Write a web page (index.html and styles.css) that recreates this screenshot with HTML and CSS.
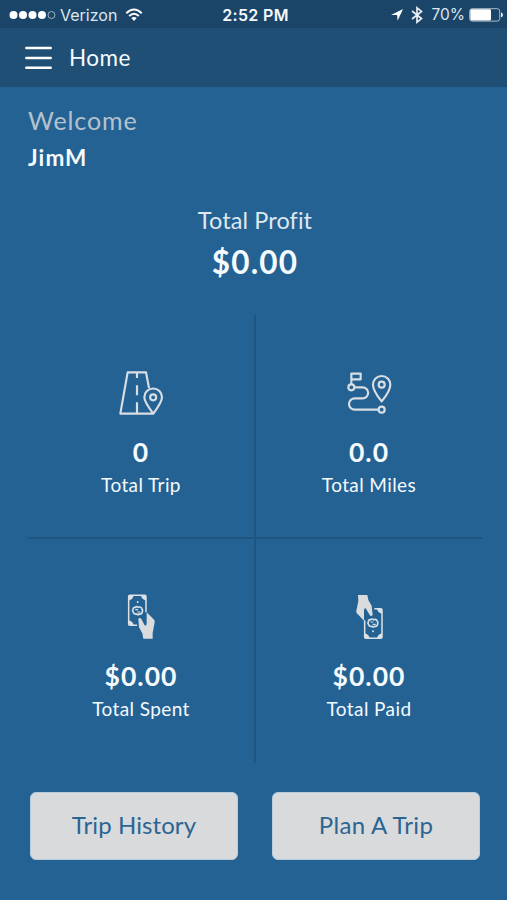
FILE: index.html
```html
<!DOCTYPE html>
<html lang="en">
<head>
<meta charset="utf-8">
<title>Home</title>
<link rel="stylesheet" href="styles.css">
</head>
<body>
<div class="status">
  <div class="status-side">
    <svg class="signal" width="47" height="10" viewBox="0 0 47 10"><g fill="#fff"><circle cx="4.5" cy="5" r="4"/><circle cx="14" cy="5" r="4"/><circle cx="23.5" cy="5" r="4"/><circle cx="33" cy="5" r="4"/></g><circle cx="42.5" cy="5" r="3.5" fill="none" stroke="#a9bccb" stroke-width=".9"/></svg>
    <span class="carrier">Verizon</span>
    <svg class="wifi" width="18" height="14" viewBox="0 0 18 14" fill="none" stroke="#fff" stroke-width="2"><path d="M1.3 5.2Q9-2.2 16.7 5.2M4.2 8Q9 3.4 13.8 8"/><path d="M6.3 10.1Q9 7.8 11.7 10.1L9 12.9Z" fill="#fff" stroke="none"/></svg>
  </div>
  <span class="clock">2:52 PM</span>
  <div class="status-side right">
    <svg class="locate" width="12" height="12" viewBox="0 0 12 12"><path d="M0 6.1 12 0 6.6 11.7 6.1 6.1Z" fill="#fff"/></svg>
    <svg class="bluetooth" width="12" height="18" viewBox="0 0 12 18" fill="none" stroke="#e8eef3" stroke-width="1.7"><path d="M1 5 10.5 12.6 6 16.2V1.8L10.5 5.4 1 13"/></svg>
    <span class="percent">70%</span>
    <svg class="battery" width="34" height="14" viewBox="0 0 34 14"><rect x=".7" y=".7" width="30" height="12.4" rx="2.4" fill="none" stroke="#a9bccb" stroke-width="1"/><rect x="1.3" y="1.3" width="20.7" height="11.2" rx="1.4" fill="#fff"/><path d="M32 4.6Q34 5 34 7T32 9.4Z" fill="#e8eef3"/></svg>
  </div>
</div>
<header class="navbar">
  <svg class="menu" width="27" height="24" viewBox="0 0 27 24" stroke="#fff" stroke-width="2.5" stroke-linecap="round"><path d="M1.3 2.1H25.7M1.3 12H25.7M1.3 21.7H25.7"/></svg>
  <h1 class="title"><span>Home</span></h1>
</header>
<main class="content">
  <div class="greeting">
    <p class="welcome"><span>Welcome</span></p>
    <p class="name"><span>JimM</span></p>
  </div>
  <div class="profit">
    <p class="profit-label"><span>Total Profit</span></p>
    <p class="profit-value"><span>$0.00</span></p>
  </div>
  <section class="stats">
    <div class="stat">
      <svg class="icon" viewBox="84 30 144 138" fill="none" stroke="#d9dee3" stroke-width="6.5" stroke-linejoin="round"><path d="M180 84 171 37H116L94 161H193Q166 126 166 112A26.5 26.5 0 1 1 219 112Q219 126 193 161"/><path d="M144 37V54M144 76V106M144 127V161"/><circle cx="192.5" cy="112" r="9"/></svg>
      <p class="value"><span>0</span></p>
      <p class="label"><span>Total Trip</span></p>
    </div>
    <div class="stat">
      <svg class="icon" viewBox="104 30 144 138" fill="none" stroke="#d9dee3" stroke-width="6.5" stroke-linejoin="round"><path d="M123 72V41H151V58H126M133 82H157A16.5 16.5 0 0 1 157 115H133A17 17 0 0 0 133 149H203"/><circle cx="123" cy="82" r="9"/><circle cx="214" cy="149" r="9"/><path d="M214 124Q188 92 188 74A26 26 0 1 1 240 74Q240 92 214 124Z"/><circle cx="214" cy="74" r="9"/></svg>
      <p class="value"><span>0.0</span></p>
      <p class="label"><span>Total Miles</span></p>
    </div>
    <div class="stat">
      <svg class="icon" viewBox="112 25 144 138"><path d="M172 119H151Q147 119 147 115V33Q147 29 151 29H195Q199 29 199 33V80" fill="none" stroke="#dce1e5" stroke-width="4.5"/><path d="M147 29H162Q160 42 147 45ZM199 29H184Q186 42 199 45ZM147 119V104Q160 107 162 119Z" fill="#dce1e5"/><circle cx="174" cy="49" r="3" fill="#dce1e5"/><path d="M167 65Q161 64 160 71Q157 75 161 80Q163 87 171 85Q174 89 179 85Q187 86 188 78Q190 72 186 68Q183 62 176 65Q171 61 167 65Z" fill="none" stroke="#dce1e5" stroke-width="5"/><path d="M167 72H175M173 79H182" stroke="#dce1e5" stroke-width="3.5"/><path d="M191 159 188 143 178 125 176 99Q181 94 185 100L195 119Q200 122 201 114V80L222 101Q226 104 225 110L219 142V159Z" fill="#d9dbdd"/></svg>
      <p class="value"><span>$0.00</span></p>
      <p class="label"><span>Total Spent</span></p>
    </div>
    <div class="stat">
      <svg class="icon" viewBox="104 25 144 138"><path d="M192 69H211Q215 69 215 73V154Q215 158 211 158H167Q163 158 163 154V104" fill="none" stroke="#dce1e5" stroke-width="4.5"/><path d="M215 69H200Q202 81 215 84ZM163 158V143Q176 146 178 158ZM215 158V143Q202 146 200 158Z" fill="#dce1e5"/><circle cx="188" cy="137" r="3" fill="#dce1e5"/><path d="M181 102Q175 101 174 108Q171 112 175 117Q177 124 185 122Q188 126 193 122Q201 123 202 115Q204 109 200 105Q197 99 190 102Q185 98 181 102Z" fill="none" stroke="#dce1e5" stroke-width="5"/><path d="M181 109H189M187 116H196" stroke="#dce1e5" stroke-width="3.5"/><path d="M171 28 174 43 184 60 187 88Q182 94 178 88L167 69Q162 66 161 73V105L141 84Q137 82 138 75L144 46 143 28Z" fill="#d9dbdd"/></svg>
      <p class="value"><span>$0.00</span></p>
      <p class="label"><span>Total Paid</span></p>
    </div>
  </section>
  <div class="actions">
    <button class="btn history"><span>Trip History</span></button>
    <button class="btn plan"><span>Plan A Trip</span></button>
  </div>
</main>
</body>
</html>
```
FILE: styles.css
```css
* { box-sizing: border-box; }
body {
  margin: 0;
  width: 507px;
  height: 900px;
  overflow: hidden;
  background: #246294;
  color: #f5fafd;
  font-family: Lato, "Liberation Sans", sans-serif;
}
p, h1 { margin: 0; }
svg { display: block; flex: none; }
.status {
  height: 28px;
  display: flex;
  align-items: center;
  padding: 1px 5px 0 9px;
  background: #1b4568;
  font-family: Inter, sans-serif;
  font-size: 16px;
  line-height: 28px;
}
.status-side { flex: 1; display: flex; align-items: center; }
.right { justify-content: flex-end; }
.carrier { margin-left: 4px; color: #dce7ef; }
.wifi { margin-left: 8px; }
.clock { font-weight: 600; font-size: 16px; letter-spacing: .35px; }
.percent { margin: 0 4px 0 8px; color: #dce7ef; font-size: 15.5px; }
.bluetooth { margin-left: 8px; }
.battery { margin-right: -1px; }
.locate { margin-left: auto; }
.navbar {
  height: 59px;
  display: flex;
  align-items: center;
  padding: 1px 25px 0;
  background: #1f4f74;
}
.title { margin-left: 17px; font-size: 22.5px; font-weight: 400; line-height: 30px; letter-spacing: .5px; padding-bottom: 1px; }
.content { padding: 17px 25px 0 28px; }
.welcome { height: 32px; line-height: 32px; font-size: 25px; letter-spacing: .9px; color: #b5c2cd; }
.name { margin-top: 7px; height: 30px; line-height: 30px; font-size: 22.5px; font-weight: 700; letter-spacing: 1.1px; }
.profit { margin-top: 32px; text-align: center; }
.profit-label { height: 30px; line-height: 30px; font-size: 23.5px; color: #dfe8ef; letter-spacing: .1px; }
.profit-value { height: 42px; margin-top: 6px; line-height: 42px; font-size: 31.5px; font-weight: 700; letter-spacing: 1.2px; }
.stats {
  margin-top: 32px;
  height: 448px;
  display: grid;
  grid-template-columns: 228px 226px;
  grid-template-rows: 224px 224px;
}
.stat { display: flex; flex-direction: column; align-items: center; padding-top: 55px; }
.stat:nth-child(odd) { border-right: 2px solid #1f5580; }
.stat:nth-child(-n+2) { border-bottom: 2px solid #1f5580; }
.icon { width: 48px; height: 46px; }
.value { margin-top: 18px; height: 36px; line-height: 36px; font-size: 26.5px; font-weight: 700; letter-spacing: 1px; }
.label { margin-top: 2px; height: 26px; line-height: 26px; font-size: 19px; letter-spacing: .4px; }
.actions { display: flex; gap: 34px; margin: 29px 0 0 2px; }
.btn {
  width: 208px;
  height: 68px;
  padding: 0 0 4px;
  border: 1px solid #b8cddd;
  border-radius: 6px;
  background: #d9dadb;
  color: #2a6593;
  font: 400 24px Lato, sans-serif;
  letter-spacing: .3px;
}
.history { letter-spacing: .1px; }
```
